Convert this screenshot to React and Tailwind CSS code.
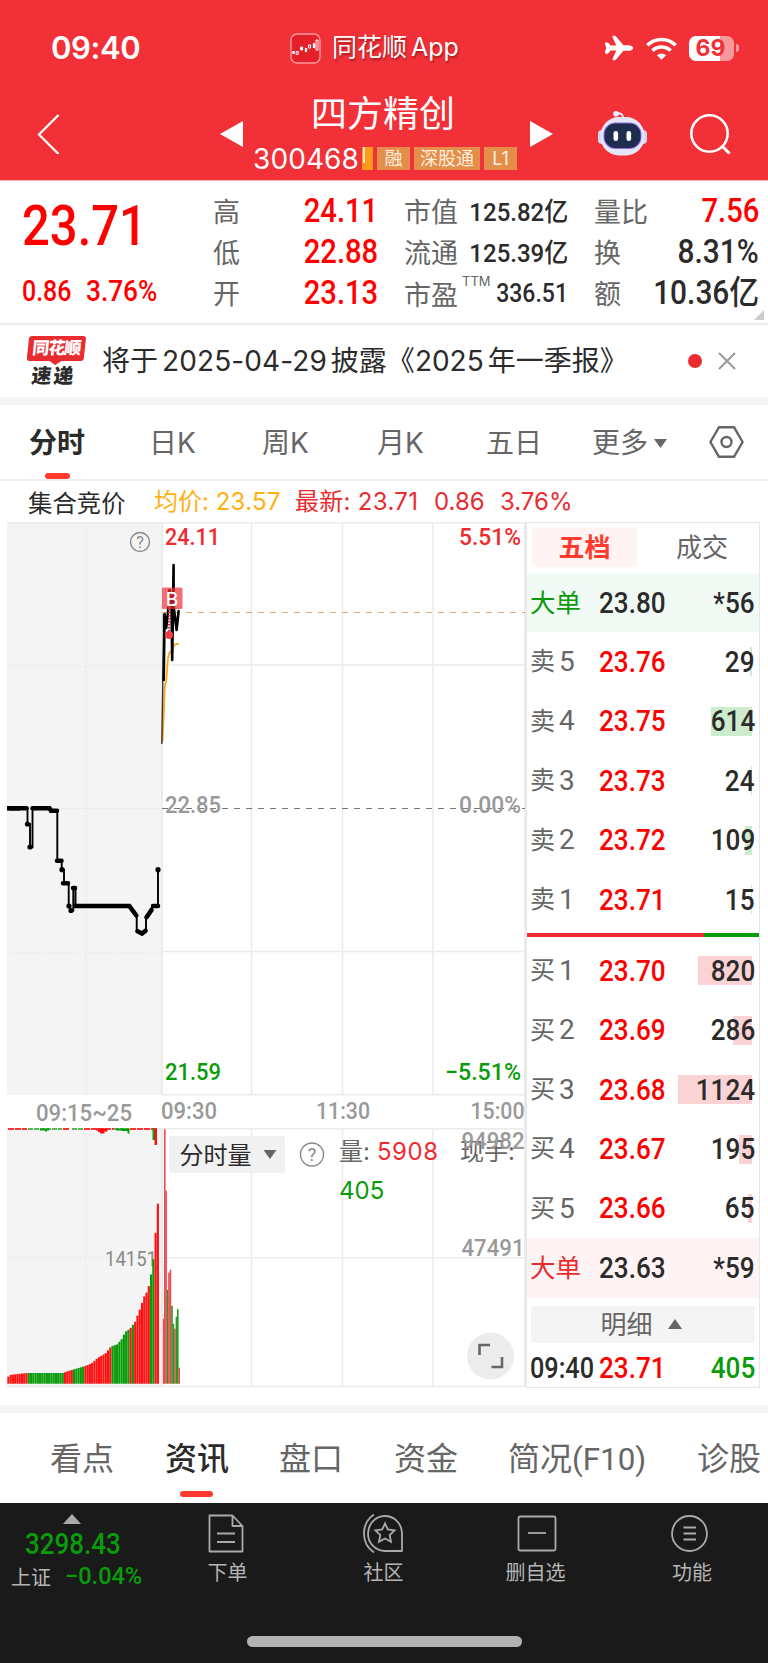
import React from 'react';
import { IoAirplane } from 'react-icons/io5';

const dayRange = [
  { label: '高', value: '24.11' },
  { label: '低', value: '22.88' },
  { label: '开', value: '23.13' },
];

const asks = [
  { name: '卖', level: '5', price: '23.76', amount: '29', bar: 2 },
  { name: '卖', level: '4', price: '23.75', amount: '614', bar: 41 },
  { name: '卖', level: '3', price: '23.73', amount: '24', bar: 1 },
  { name: '卖', level: '2', price: '23.72', amount: '109', bar: 7 },
  { name: '卖', level: '1', price: '23.71', amount: '15', bar: 1 },
];

const bids = [
  { name: '买', level: '1', price: '23.70', amount: '820', bar: 54 },
  { name: '买', level: '2', price: '23.69', amount: '286', bar: 19 },
  { name: '买', level: '3', price: '23.68', amount: '1124', bar: 74 },
  { name: '买', level: '4', price: '23.67', amount: '195', bar: 13 },
  { name: '买', level: '5', price: '23.66', amount: '65', bar: 4 },
];

// [x, height] of the call auction volume curve
const auctionProfile = [
  [7, 4], [9, 8.7], [27, 10.7], [63, 10.7], [68, 12.7], [84, 17.3], [91, 20], [98, 26],
  [106, 30.7], [111, 37.3], [117, 39.3], [122, 45], [125, 51.7], [130, 55], [135, 61.7],
  [140, 75], [144, 87], [147, 92], [149.5, 100], [151.5, 112.3], [153.5, 126], [155.6, 151.7], [157.6, 180.3],
];

// [from, to, color]
const auctionColors = [
  [7, 27, 'r'], [27, 63, 'g'], [63, 72, 'r'], [72, 84, 'g'], [84, 111, 'r'], [111, 130, 'g'],
  [130, 132, 'r'], [132, 134, 'g'], [134, 150.5, 'r'], [150.5, 154.7, 'g'], [154.7, 160, 'r'],
];

const heightAt = (x) => {
  for (let i = 1; i < auctionProfile.length; i++) {
    const [x0, h0] = auctionProfile[i - 1];
    const [x1, h1] = auctionProfile[i];
    if (x <= x1) return h0 + ((h1 - h0) * (x - x0)) / (x1 - x0);
  }
  return 180;
};

const auctionBars = Array.from({ length: 67 }, (_, i) => {
  const x = 7.3 + i * 2.265;
  const seg = auctionColors.find(([a, b]) => x + 1 >= a && x + 1 < b);
  return { x, h: heightAt(x + 1), fill: seg && seg[2] === 'g' ? '#0a9b0a' : '#ff1010' };
});

const minuteBars = [
  [162.9, 65, 'r'], [164, 254.5, 'r'], [165.3, 193, 'r'], [166.8, 94, 'g'], [168.2, 111, 'r'], [169.6, 114, 'r'],
  [171.2, 78, 'g'], [172.6, 60, 'g'], [174.1, 55, 'r'], [175.6, 67, 'g'], [177, 74.5, 'g'], [178.4, 16, 'r'],
];

const Red = '#f02b30';

const Price = ({ children, className = '' }) => (
  <span className={`inline-block scale-x-[.885] whitespace-nowrap font-['Roboto','Noto_Sans_CJK_SC',sans-serif] font-medium ${className}`}>
    {children}
  </span>
);

const StatusBar = () => (
  <div className="flex h-[94px] items-center pt-0.5">
    <div className="w-[238px] pl-[51px] text-[31px] font-semibold tracking-[-0.4px]">09:40</div>
    <div className="flex w-[366px] items-center pl-[52px]">
      <svg className="h-[31px] w-[31px]" viewBox="0 0 31 31" fill="none" stroke="#fff">
        <rect x="1" y="1" width="29" height="29" rx="6" fill="#e52028" stroke="#ff9a9a" strokeWidth="1.4" />
        <path d="M3.5 18v3M12 14v3M16 15v4M24 10v5" strokeWidth="2.2" />
        <path d="M6.2 18.5h2v3h-2zM10.5 14h2v3h-2zM18.5 12h2v3h-2zM26 7h2v10h-2z" strokeWidth="1" />
      </svg>
      <div className="ml-[11px] flex text-[25px] font-normal [text-shadow:1px_2px_2px_rgba(80,0,0,.45)]">
        同花顺<span className="ml-[4px]">App</span>
      </div>
    </div>
    <IoAirplane className="h-[30px] w-[30px]" />
    <svg className="ml-3 h-[23px] w-[31px]" viewBox="0 0 31 23" fill="none" stroke="#fff" strokeWidth="3.6">
      <path d="M1.3 8.2a20.5 20.5 0 0 1 28.4 0" />
      <path d="M6.4 13.6a13.2 13.2 0 0 1 18.2 0" />
      <path d="M15.5 22.8l-4.5-4.6a6.6 6.6 0 0 1 9 0z" fill="#fff" stroke="none" />
    </svg>
    <div className="ml-3 flex h-[25px] w-[45px] items-center justify-center rounded-[7px] bg-linear-to-r from-white from-69% to-[#f9989b] to-69% pr-[2px] text-[23px] font-bold text-[#f23038]">
      69
    </div>
    <div className="ml-0.5 h-2 w-[3px] rounded-r bg-[#f9989b]" />
  </div>
);

const TitleBar = () => (
  <div className="flex h-[86px] items-start">
    <svg className="ml-[37px] mt-[20px] h-10 w-6" viewBox="0 0 24 40" fill="none" stroke="#fff" strokeWidth="2.2">
      <path d="M21.5 1L2 20.5 21.5 40" />
    </svg>
    <svg className="ml-[159px] mt-[27px] h-[26px] w-[23px]" viewBox="0 0 23 26" fill="#fff"><path d="M23 0v26L0 13z" /></svg>
    <div className="ml-[10px] flex w-[264px] flex-col">
      <div className="h-[50px] pl-[58px] text-[36px] leading-[40px] whitespace-nowrap">四方精创</div>
      <div className="flex h-6 items-center text-[18px] leading-[23px] text-[#ffeede]">
        <span className="w-[109px] pt-[5px] text-[28px] leading-6 tracking-[0.1px] text-white">300468</span>
        <span className="mt-[5px] h-[23px] w-[11px] overflow-hidden bg-[#ff9a1c]"><i className="block h-4 w-[3px] border-r-2 border-[#ffe6c0]" /></span>
        <span className="ml-1 mt-[5px] h-[23px] w-[33px] bg-[#e38f4b] text-center">融</span>
        <span className="ml-1 mt-[5px] h-[23px] w-[66px] bg-[#e38f4b] text-center">深股通</span>
        <span className="ml-1 mt-[5px] h-[23px] w-[33px] bg-[#e38f4b] text-center">L1</span>
      </div>
    </div>
    <svg className="ml-[13px] mt-[27px] h-[26px] w-[23px]" viewBox="0 0 23 26" fill="#fff"><path d="M0 0v26l23-13z" /></svg>
    <svg className="ml-[45px] mt-[16px] h-[46px] w-[50px]" viewBox="0 0 50 46" fill="none">
      <path d="M25 9C25.5 4.5 22.500 2.500 18 3.5" stroke="#eceefc" strokeWidth="1.8" strokeLinecap="round" />
      <circle cx="18" cy="3.7" r="2.8" fill="#eef0ff" />
      <rect x="0" y="20" width="8" height="14" rx="4" fill="#d3d6f6" />
      <rect x="41" y="20" width="8" height="14" rx="4" fill="#d3d6f6" />
      <rect x="2.5" y="7" width="44" height="38.5" rx="18.5" fill="#e4e6f9" />
      <rect x="5.5" y="12.5" width="38" height="26.5" rx="12" fill="#8a6be8" />
      <rect x="6.5" y="13.5" width="36" height="24.5" rx="11" fill="#202b50" />
      <rect x="15.5" y="21" width="4.6" height="10" rx="2.2" fill="#fff" />
      <rect x="28.500" y="21" width="4.6" height="10" rx="2.2" fill="#fff" />
    </svg>
    <svg className="ml-[41px] mt-[19px] h-[43px] w-[43px]" viewBox="0 0 43 43" fill="none" stroke="#fff" strokeWidth="2.6">
      <circle cx="20.5" cy="20.5" r="18.2" />
      <path d="M33.500 33.5l7 7" strokeWidth="3" />
    </svg>
  </div>
);

const QuoteItem = ({ label, small = false, red = false, children }) => (
  <div className="flex h-[41px] items-center justify-between leading-[41px] whitespace-nowrap">
    <span>{label}</span>
    <Price
      className={`origin-right ${small ? '-mt-0.5 text-[26.5px]' : '-mt-[5px] text-[33px]'} ${red ? 'text-[#ff0000]' : 'scale-x-[.905]! text-[#2b2b2b]'}`}
    >
      {children}
    </Price>
  </div>
);

const Quote = () => (
  <section className="relative flex h-[144px] border-b-2 border-[#ececec] pt-[11px] text-[27px] text-[#666]">
    <div className="w-[213px] pl-[22px] text-[#ff0000]">
      <div className="h-[81px] leading-[69px]">
        <Price className="origin-left scale-x-[.89]! text-[55px]">23.71</Price>
      </div>
      <div className="flex text-[29px] leading-[36px]">
        <Price className="w-[64px] origin-left scale-x-[.86]!">0.86</Price>
        <Price className="origin-left scale-x-[.905]!">3.76%</Price>
      </div>
    </div>
    <div className="w-[165px]">
      {dayRange.map((r) => (
        <QuoteItem key={r.label} label={r.label} red>{r.value}</QuoteItem>
      ))}
    </div>
    <div className="ml-[26px] w-[164px]">
      <QuoteItem label="市值" small>125.82亿</QuoteItem>
      <QuoteItem label="流通" small>125.39亿</QuoteItem>
      <div className="flex h-[41px] items-center leading-[41px] whitespace-nowrap">
        <span className="pt-[2px]">市盈</span>
        <span className="mb-7 ml-[4px] w-[27px] text-[13px] leading-4">TTM</span>
        <Price className="-mt-0.5 ml-[-13px] w-[94px] origin-right text-right text-[26px] text-[#2b2b2b]">336.51</Price>
      </div>
    </div>
    <div className="ml-[26px] w-[165px]">
      <QuoteItem label="量比" red>7.56</QuoteItem>
      <QuoteItem label="换">8.31%</QuoteItem>
      <QuoteItem label="额">10.36亿</QuoteItem>
    </div>
    <svg className="absolute right-1 bottom-[3px] h-2.5 w-2.5" viewBox="0 0 10 10" fill="#ccc"><path d="M10 0v10H0z" /></svg>
  </section>
);

const NewsBar = () => (
  <section className="flex h-[80px] border-b-8 border-[#f4f4f4] text-[#2b2b2b]">
    <div className="ml-[26px] mt-[11px] w-[57px] -skew-x-6">
      <div className="h-[25px] rounded-[3px] bg-[#e82c30] text-center text-[17px] font-black leading-[25px] tracking-[-1px] text-white">同花顺</div>
      <svg className="mx-auto h-1 w-3" viewBox="0 0 12 4" fill="#e82c30"><path d="M0 0h12L6 4z" /></svg>
      <div className="text-center text-[20px] font-black leading-[22px] tracking-[2px]">速递</div>
    </div>
    <div className="ml-[19px] flex w-[586px] pt-px text-[28px] leading-[71px] whitespace-nowrap">
      将于<span className="mx-1 tracking-[0.1px]">2025-04-29</span>披露《<span>2025</span><span className="ml-1">年一季报》</span>
    </div>
    <div className="mt-[29px] h-[14px] w-[14px] rounded-full bg-[#e82c30]" />
    <svg className="ml-[16px] mt-[27px] h-[18px] w-[18px]" viewBox="0 0 18 18" stroke="#999" strokeWidth="2"><path d="M1 1l16 16M17 1L1 17" /></svg>
  </section>
);

const PeriodTabs = () => (
  <nav className="flex h-[76px] border-b-2 border-[#f0f0f0] text-[28px] leading-[77px] whitespace-nowrap text-[#666]">
    <div className="relative ml-[29px] w-[120px] font-bold text-[#2b2b2b]">
      分时
      <div className="absolute bottom-0 left-4 h-1.5 w-[25px] rounded-full bg-[#ff3b30]" />
    </div>
    <div className="w-[113px]">日K</div>
    <div className="w-[115px]">周K</div>
    <div className="w-[109px]">月K</div>
    <div className="w-[106px]">五日</div>
    <div className="flex w-[117px] items-center pt-0.5">
      更多
      <svg className="ml-[6px] h-[9px] w-[13px]" viewBox="0 0 13 9" fill="#666"><path d="M0 0h13L6.5 9z" /></svg>
    </div>
    <svg className="mt-[21px] h-[32px] w-[35px]" viewBox="0 0 35 32" fill="none" stroke="#666" strokeWidth="2.4">
      <path d="M10 1.2h15L33.6 16 25 30.8H10L1.4 16z" strokeLinejoin="round" />
      <circle cx="17.5" cy="16" r="5" />
    </svg>
  </nav>
);

const AverageRow = () => (
  <div className="flex h-[41px] text-[24px] leading-[41px] whitespace-nowrap text-[#e82c30]">
    <span className="ml-[28px] w-[126px] pt-[2px] text-[24.4px] text-[#2b2b2b]">集合竞价</span>
    <span className="w-[141px] text-[#ffb012]">均价: <span className="tracking-[0.3px]">23.57</span></span>
    <span className="w-[139px] tracking-[0.3px]">最新: 23.71</span>
    <span className="w-[66px]">0.86</span>
    <span>3.76%</span>
  </div>
);

const Label = ({ x, y, w, fill = '#999', size = 24, anchor = 'start', weight = 500, children }) => (
  <text x={x} y={y} fill={fill} fontSize={size} fontWeight={weight} textAnchor={anchor} textLength={w} lengthAdjust="spacingAndGlyphs">
    {children}
  </text>
);

const HelpMark = ({ cx, cy, r, size }) => (
  <g>
    <circle cx={cx} cy={cy} r={r} fill="none" stroke="#888" strokeWidth="1.4" />
    <text x={cx} y={cy + size * 0.36} fill="#888" fontSize={size} textAnchor="middle">?</text>
  </g>
);

/* The viewBox keeps page units: x 0-526, y 522-1388. */
const Chart = () => (
  <svg className="h-[866px] w-[526px] shrink-0 font-['Roboto','Noto_Sans_CJK_SC',sans-serif]" viewBox="0 522 526 866">
    <rect x="7" y="522" width="155" height="573" fill="#f4f4f4" />
    <rect x="7" y="1129" width="155" height="257" fill="#f4f4f4" />
    <g stroke="#e9e9e9" strokeWidth="1.3" strokeDasharray="2 2.5">
      <path d="M86 522V1095M86 1129V1386M7 665.5H162M7 952.5H162M7 1257.5H162" />
    </g>
    <path d="M7 808.5H162" stroke="#ececec" />
    <g stroke="#ebebeb" strokeWidth="1.5">
      <path d="M7 522.7H524M162 1094.7H525M7 1128.8H525M7 1386.5H526" />
      <path d="M162 665H525M162 951.5H525M162 1257.8H525" />
      <path d="M251.5 522V1094M342.5 522V1094M433 522V1094M251.5 1129V1386M342.5 1129V1386M433 1129V1386" />
      <path d="M162 522V1094M162 1129V1386M525 522V1387" strokeWidth="2" />
    </g>

    <path d="M162 808.5H525" stroke="#777" strokeWidth="1.2" strokeDasharray="6 6" />
    <path d="M162 612.5H525" stroke="#dcae70" strokeWidth="1.2" strokeDasharray="6 6" />

    {/* call auction line */}
    <path
      d="M7 808.3H27.5V824H30V847.3H32.5V808.3H50L51 810.7H57.3V860.7H61.7V869.7H64V883.3H68.7V906L71 910.5H73.3V888H75.5V906H129.3L136.7 916V931.3L142 934L146 930.7V917.3L152.7 906H158V869.7"
      fill="none" stroke="#000" strokeWidth="1.9"
    />
    <path d="M7 808.3H20" stroke="#000" strokeWidth="4.6" />
    <path
      d="M10 808.3H26.5M32.5 808.3H49.5L51 810.7H57M57 860.7H61.5M63 883.3H68M73 888H75M75 906H129.3L136.3 915.5M137.5 931.3L142 933.5L145.5 930.7M146.5 917.3L151.5 910M153 906H158"
      fill="none" stroke="#000" strokeWidth="4.6" strokeLinecap="round"
    />
    {[[27.5, 824], [30, 847], [62, 869.7], [69, 906], [71, 910.5], [158, 869.7]].map(([x, y]) => (
      <circle key={`${x}-${y}`} cx={x} cy={y} r="2.6" />
    ))}

    {/* average and price lines */}
    <path d="M162.5 742L163.5 720L164.8 686L166.2 681L168 658L169.5 652.5L172 650.5L174 645.5L176 643.8H178.7" fill="none" stroke="#ffa31a" strokeWidth="1.8" />
    <path d="M161.8 744L163.5 640V614" fill="none" stroke="#333" strokeWidth="1.4" />
    <path
      d="M163.7 680L164.6 614L166.2 628L168 612L169.5 590L171.5 606L172.2 660L173.6 565V606L176.6 630L178.6 611"
      fill="none" stroke="#000" strokeWidth="2.6" strokeLinejoin="round" strokeLinecap="round"
    />
    <path d="M169 600V635" stroke="#f02b30" strokeWidth="2" strokeDasharray="1.5 1.5" />
    <circle cx="169" cy="635" r="4" fill="#f23e45" />
    <rect x="162" y="587.5" width="20.5" height="21.5" rx="1.5" fill="#ee3038" fillOpacity=".7" />
    <text x="172" y="605.5" fill="#fff" fontSize="19" fontWeight="500" textAnchor="middle" className="font-['Inter']">B</text>

    <Label x={165} y={545} w={55} fill={Red}>24.11</Label>
    <Label x={521} y={545} w={62} fill={Red} anchor="end">5.51%</Label>
    <Label x={165} y={812.5} w={56}>22.85</Label>
    <Label x={521} y={812.5} w={62} anchor="end">0.00%</Label>
    <Label x={165} y={1079.5} w={56} fill="#0a9b0a">21.59</Label>
    <Label x={521} y={1079.5} w={76} fill="#0a9b0a" anchor="end">−5.51%</Label>
    <Label x={36} y={1121} w={96}>09:15~25</Label>
    <Label x={161} y={1119} w={56}>09:30</Label>
    <Label x={316} y={1119} w={54}>11:30</Label>
    <Label x={524.5} y={1119} w={54} anchor="end">15:00</Label>
    <HelpMark cx={140} cy={542} r={9.5} size={16} />

    {/* volume */}
    <Label x={105} y={1265.5} w={52} fill="#888" size={19.5} weight={400}>14151</Label>
    {auctionBars.map((b) => (
      <rect key={b.x} x={b.x} y={1383.7 - b.h} width="2.15" height={b.h} fill={b.fill} />
    ))}
    {minuteBars.map(([x, h, c]) => (
      <rect key={x} x={x} y={1383.7 - h} width="1.6" height={h} fill={c === 'g' ? '#259a25' : '#ef4850'} />
    ))}
    <path d="M8 1129H27M63 1129H70M84 1129H114M130 1129H158" stroke="#f33" strokeWidth="1.8" strokeDasharray="6 1" />
    <path d="M28 1129H62M72 1129H83M114 1129H129" stroke="#2a2" strokeWidth="1.5" strokeDasharray="5 1" />
    <path d="M40 1128.5H49V1130.5H47V1131.500H45V1130.500H40zM116 1128.5H129.500V1133.5H127.500V1131H122V1130.500H116zM152.5 1128.5H155V1140H152.500z" fill="#0a9b0a" />
    <path d="M96 1128.5H107.500V1131.500H104.500V1133.500H100V1132H98V1130.500H96zM154.500 1128.5H157V1145H154.500z" fill="#ff1010" />

    <rect x="169" y="1136" width="116" height="37" rx="3" fill="#efefef" fillOpacity=".9" />
    <text x="179.5" y="1164" fill="#2b2b2b" fontSize="24">分时量</text>
    <path d="M263.5 1150H276.5L270 1159z" fill="#666" />
    <HelpMark cx={312} cy={1154.5} r={11.5} size={18} />
    <g className="font-['Inter','Noto_Sans_CJK_SC',sans-serif]" fontSize="24" fill="#666">
      <text x="339" y="1160">量:</text>
      <text x="377" y="1160" fill={Red} textLength="61">5908</text>
      <text x="460" y="1160">现手:</text>
      <text x="339" y="1198.5" fill="#0a9b0a">405</text>
    </g>
    <Label x={524.5} y={1148.5} w={63} anchor="end">94982</Label>
    <Label x={524.5} y={1256} w={63} anchor="end">47491</Label>

    <circle cx="490.5" cy="1356" r="23.5" fill="#ececec" />
    <path d="M479.5 1355V1345H490M491.5 1367H502V1357" fill="none" stroke="#666" strokeWidth="2.6" />
  </svg>
);

const BookRow = ({ row, barClass }) => (
  <div className="relative flex h-[59.4px] shrink-0 items-center pr-1 pl-[3px] text-[25px] text-[#666]">
    <div className={`absolute right-[7px] top-[15px] h-[29px] ${barClass}`} style={{ width: row.bar }} />
    <span className="w-[29px] text-[25px]">{row.name}</span>
    <span className="w-[40px] font-['Roboto'] text-[28px] font-normal">{row.level}</span>
    <Price className="relative origin-left text-[29.5px] text-[#ff0000]">{row.price}</Price>
    <Price className="relative ml-auto origin-right text-[29.5px] text-[#2b2b2b]">{row.amount}</Price>
  </div>
);

const BigOrder = ({ price, amount, className, nameClass }) => (
  <div className={`flex h-[59.4px] shrink-0 items-center pr-1 pl-[3px] ${className}`}>
    <span className={`w-[69px] text-[25.5px] ${nameClass}`}>大单</span>
    <Price className="origin-left text-[29.5px] text-[#2b2b2b]">{price}</Price>
    <Price className="ml-auto origin-right text-[29.5px] text-[#2b2b2b]">{amount}</Price>
  </div>
);

const OrderBook = () => (
  <aside className="flex w-[234px] flex-col border border-[#e6e6e6]">
    <div className="flex h-[50px] shrink-0 pt-[5px] text-[26px] leading-[40px]">
      <div className="ml-[5px] h-[39px] w-[105px] rounded bg-[#fff4f3] text-center font-bold text-[#ff3b30]">五档</div>
      <div className="w-[122px] pl-[8px] text-center text-[#666]">成交</div>
    </div>
    <BigOrder price="23.80" amount="*56" className="bg-[#f2faf6]" nameClass="text-[#0a9b0a]" />
    {asks.map((row) => <BookRow key={row.level} row={row} barClass="bg-[#cdebcd]" />)}
    <div className="my-1 flex h-1 shrink-0 bg-[#0a9b0a]">
      <div className="w-[177px] bg-[#ea2c30]" />
    </div>
    {bids.map((row) => <BookRow key={row.level} row={row} barClass="bg-[#fbd3d5]" />)}
    <BigOrder price="23.63" amount="*59" className="bg-[#fff4f3]" nameClass="text-[#e82c30]" />
    <div className="mx-1 mt-2 flex h-[37px] shrink-0 items-center justify-center bg-[#f4f4f4] pr-1 text-[26px] leading-[37px] text-[#666]">
      明细
      <svg className="ml-[15px] h-2.5 w-[14px]" viewBox="0 0 14 10" fill="#666"><path d="M0 10h14L7 0z" /></svg>
    </div>
    <div className="flex flex-1 items-center pt-2 pr-1 pl-[3px] leading-none">
      <Price className="w-[69px] origin-left scale-x-[.87]! text-[29px] text-[#2b2b2b]">09:40</Price>
      <Price className="origin-left text-[29.5px] text-[#ff0000]">23.71</Price>
      <Price className="ml-auto origin-right text-[29.5px] text-[#0a9b0a]">405</Price>
    </div>
  </aside>
);

const InfoTabs = () => (
  <nav className="flex h-[98px] shrink-0 overflow-hidden border-t-8 border-[#f4f4f4] text-[32px] leading-[91px] whitespace-nowrap text-[#666]">
    <div className="ml-[50px] w-[115px]">看点</div>
    <div className="relative w-[114px] font-medium text-[#2b2b2b]">
      资讯
      <div className="absolute bottom-[6px] left-[15px] h-1.5 w-[33px] rounded-full bg-[#ff3b30]" />
    </div>
    <div className="w-[115px]">盘口</div>
    <div className="w-[114px]">资金</div>
    <div className="w-[189px]">简况<Price className="origin-left scale-x-[.98]! font-normal!">(F10)</Price></div>
    <div>诊股</div>
  </nav>
);

const FooterItem = ({ label, className, children }) => (
  <div className={`flex flex-col items-center ${className}`}>
    <svg className="mt-[9px] h-[42px] w-[46px]" viewBox="0 0 46 42" fill="none" stroke="#aaa" strokeWidth="1.8">{children}</svg>
    <span className="mt-[4px] text-[20px] leading-[30px]">{label}</span>
  </div>
);

const BottomBar = () => (
  <footer className="h-[160px] shrink-0 bg-[#1a1a1a] text-[#b5b5b5]">
    <div className="flex h-[133px]">
      <div className="flex w-[151px] flex-col">
        <svg className="mt-[11px] ml-[63px] h-2.5 w-[18px]" viewBox="0 0 18 10" fill="#aaa"><path d="M0 10h18L9 0z" /></svg>
        <Price className="mt-[3px] ml-[25px] w-[120px] origin-left scale-x-[.895]! text-[29px] leading-[34px] text-[#0a9b0a]">3298.43</Price>
        <div className="flex items-center pl-[11px] text-[20px] leading-[30px]">
          <span className="w-[54px] pt-0.5">上证</span>
          <Price className="-mt-0.5 origin-left scale-x-[.98]! text-[24px] text-[#0a9b0a]">−0.04%</Price>
        </div>
      </div>
      <FooterItem label="下单" className="w-[153px]">
        <path d="M4.5 3.5H27.5L37.5 14V39.5H4.5zM27.5 3.5V14H37.5M12 21.5H30M12 30H30" strokeLinejoin="round" />
      </FooterItem>
      <FooterItem label="社区" className="w-[159px]">
        <path d="M41 39V21A17 17.5 0 1 0 24 39zM13 2.5A23 23 0 0 0 13 40.5" strokeLinejoin="round" />
        <path d="M24 11.5L26.8 17.5L33.5 18.3L28.7 23L30 29.8L24 26.5L18 29.8L19.3 23L14.5 18.3L21.2 17.5z" />
      </FooterItem>
      <FooterItem label="删自选" className="w-[145px]">
        <rect x="5.5" y="4.5" width="37" height="34" rx="1.5" />
        <path d="M15 21H33" />
      </FooterItem>
      <FooterItem label="功能" className="w-[160px] pl-[8px]">
        <circle cx="20.5" cy="21.5" r="17.5" />
        <path d="M14.5 15.5H27M14.5 21.5H27M14.5 27.5H27" />
      </FooterItem>
    </div>
    <div className="mx-auto h-[11px] w-[275px] rounded-full bg-[#b3b3b3]" />
  </footer>
);

const App = () => {
  return (
    <div className="flex h-[1663px] w-[768px] flex-col overflow-hidden bg-white font-['Inter','Noto_Sans_CJK_SC',sans-serif]">
      <header className="h-[181px] shrink-0 border-b border-[#f9b4b7] bg-[#f23038] text-white">
        <StatusBar />
        <TitleBar />
      </header>
      <Quote />
      <NewsBar />
      <PeriodTabs />
      <AverageRow />
      <main className="flex h-[866px] w-[760px] shrink-0">
        <Chart />
        <OrderBook />
      </main>
      <div className="h-[17px] shrink-0" />
      <InfoTabs />
      <BottomBar />
    </div>
  );
};

export default App;
